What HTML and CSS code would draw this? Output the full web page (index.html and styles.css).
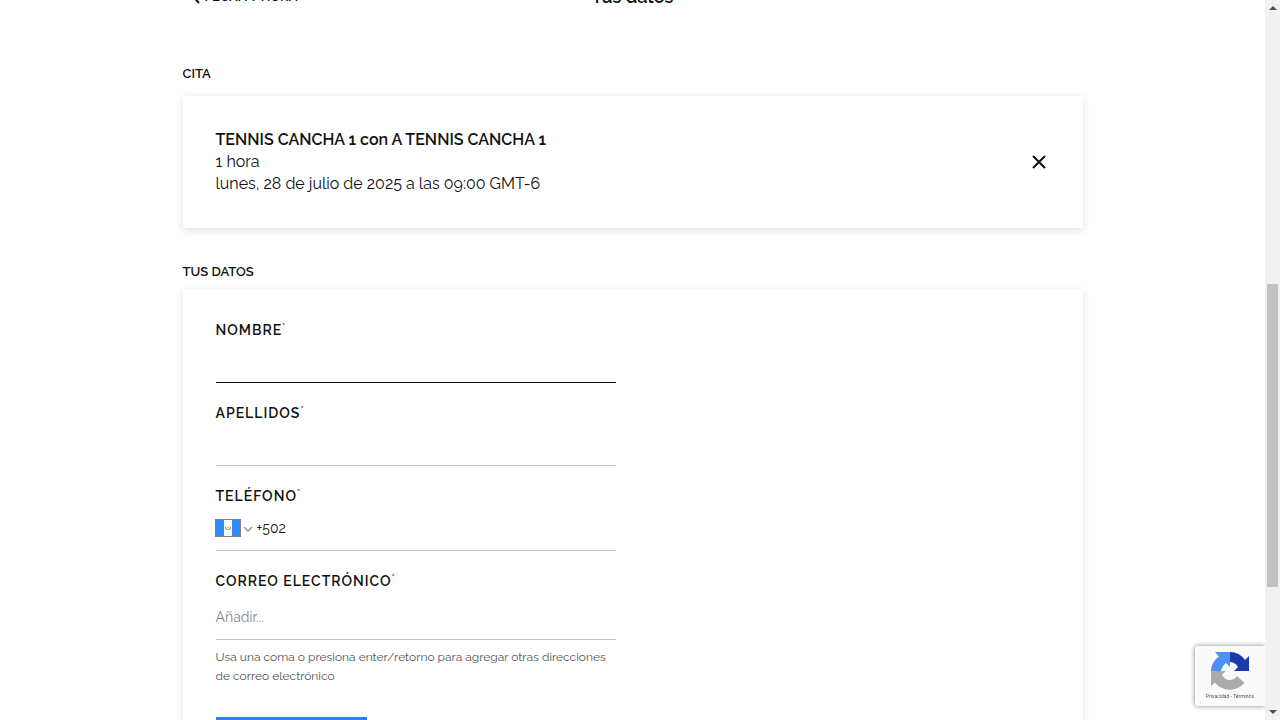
FILE: index.html
```html
<!DOCTYPE html>
<html lang="es">
<head>
<meta charset="utf-8">
<meta name="viewport" content="width=device-width, initial-scale=1">
<title>Tus datos</title>
<link rel="stylesheet" href="styles.css">
</head>
<body>
<div class="page">
  <main class="content">
    <header class="topbar">
      <a class="back" href="#">
        <svg class="back-icon" viewBox="0 0 10 18" aria-hidden="true"><path d="M9 1 1.500 9 9 17"/></svg>
        <span>FECHA Y HORA</span>
      </a>
      <h1 class="title">Tus datos</h1>
    </header>

    <h2 class="section-title">CITA</h2>
    <section class="card appointment">
      <div class="summary">
        <strong class="service">TENNIS CANCHA 1 con A TENNIS CANCHA 1</strong>
        <span>1 hora</span>
        <span>lunes, 28 de julio de 2025 a las 09:00 GMT-6</span>
      </div>
      <button class="remove" type="button">
        <svg class="remove-icon" viewBox="0 0 14 14" aria-hidden="true"><path d="M1 1l12 12M13 1 1 13"/></svg>
      </button>
    </section>

    <h2 class="section-title section-title-form">TUS DATOS</h2>
    <form class="card form">
      <div class="field">
        <label class="label" for="first">NOMBRE<span class="required">*</span></label>
        <input class="input active" id="first" type="text">
      </div>
      <div class="field">
        <label class="label" for="last">APELLIDOS<span class="required">*</span></label>
        <input class="input" id="last" type="text">
      </div>
      <div class="field">
        <label class="label" for="phone">TELÉFONO<span class="required">*</span></label>
        <div class="phone-row">
          <button class="country" type="button">
            <svg class="flag" viewBox="0 0 26 18" aria-hidden="true">
              <rect width="26" height="18" fill="#808080"/>
              <rect x="1" y="1" width="24" height="16" fill="#338af3"/>
              <rect x="9" y="1" width="8" height="16" fill="#fff"/>
              <path d="M10.500 8q0 2.500 2 2.500M15.500 8q0 2.500-2 2.500" fill="none" stroke="#628b52"/>
              <path d="M12 7.500l2 2M14 7.500l-2 2" stroke="#d9b44a"/>
            </svg>
            <svg class="chevron" viewBox="0 0 10 8" aria-hidden="true"><path d="M1 2l4 4 4-4"/></svg>
          </button>
          <input class="phone" id="phone" type="tel" value="+502">
        </div>
      </div>
      <div class="field">
        <label class="label" for="email">CORREO ELECTRÓNICO<span class="required">*</span></label>
        <input class="input email" id="email" type="email" placeholder="Añadir..." aria-describedby="hint">
        <p class="hint" id="hint">Usa una coma o presiona enter/retorno para agregar otras direcciones de correo electrónico</p>
      </div>
      <button class="submit" type="submit"></button>
    </form>
  </main>
</div>

<aside class="captcha">
  <svg class="captcha-icon" viewBox="0 0 38 38" aria-hidden="true">
    <path fill="#1c3aa9" d="M38 19V4l-4 4A19 19 0 0 0 19 0v10q5 0 8 5l-4 4z"/>
    <path fill="#4a90f5" d="M19 0H4l4 4.500A19 19 0 0 0 0 19h10q1-5 5-8l4 4z"/>
    <path fill="#ababab" d="M0 19v15l4-3.500A19 19 0 0 0 33.500 31L26 24q-3 4-7 4-5 0-8-5l4-4z"/>
  </svg>
  <span class="captcha-links"><a href="#">Privacidad</a> - <a href="#">Términos</a></span>
</aside>

<div class="scrollbar" aria-hidden="true">
  <svg class="arrow" viewBox="0 0 15 17"><path d="M4 10l4-4 4 4z"/></svg>
  <div class="track"><div class="thumb"></div></div>
  <svg class="arrow" viewBox="0 0 15 17"><path d="M4 7l4 4 4-4z"/></svg>
</div>
</body>
</html>
```
FILE: styles.css
```css
* { box-sizing: border-box; }

body {
  margin: 0;
  height: 100vh;
  display: flex;
  overflow: hidden;
  background: #fff;
  color: #111;
  font-family: Raleway, Lato, sans-serif;
  font-size: 16px;
  line-height: 22px;
}

button, input { font: inherit; color: inherit; }
button { border: 0; padding: 0; background: none; cursor: pointer; }
a { color: inherit; text-decoration: none; }

.page { flex: 1; min-width: 0; overflow: hidden; padding: 0 24px; }
.content { max-width: 900px; margin: 0 auto; }

.topbar {
  height: 8px;
  display: grid;
  grid-template-columns: 1fr auto 1fr;
  align-items: end;
  align-content: end;
}
.back {
  display: flex;
  align-items: end;
  gap: 5px;
  padding: 0 0 4px 7px;
  font-size: 13px;
  line-height: 14px;
  font-weight: 600;
}
.back-icon { width: 10px; height: 18px; fill: none; stroke: #111; stroke-width: 2; }
.title { margin: 0; font-size: 18px; line-height: 22px; font-weight: 600; }

.section-title { margin: 57px 0 13px; font-size: 13px; line-height: 18px; font-weight: 600; }
.section-title-form { margin: 35px 0 8px; }

.card { background: #fff; box-shadow: 0 2px 8px rgba(0, 0, 0, 0.12); }

.appointment {
  display: flex;
  align-items: center;
  justify-content: space-between;
  padding: 33px 32px 33px 33px;
}
.summary { display: flex; flex-direction: column; }
.service { font-weight: 600; }
.remove { display: grid; place-items: center; width: 24px; height: 24px; }
.remove-icon { width: 14px; height: 14px; stroke: #111; stroke-width: 2; }

.form { padding: 32px 33px; }
.field { max-width: 400px; margin-bottom: 21px; }
.label {
  display: block;
  font-size: 14px;
  line-height: 18px;
  font-weight: 600;
  letter-spacing: 1px;
}
.required {
  color: #d0021b;
  font-size: 10px;
  line-height: 12px;
  font-weight: 600;
  vertical-align: top;
}
.input {
  display: block;
  width: 100%;
  height: 44px;
  padding: 0;
  border: 0;
  border-bottom: 1px solid #c8c8c8;
  border-radius: 0;
  background: none;
  font-size: 14px;
  outline: 0;
}
.active { border-color: #111; }
.phone-row {
  display: flex;
  align-items: center;
  gap: 4px;
  height: 46px;
  border-bottom: 1px solid #c8c8c8;
}
.country { display: flex; align-items: center; gap: 2px; margin-left: -1px; }
.flag { width: 26px; height: 18px; }
.chevron { width: 10px; height: 8px; margin-top: 3px; fill: none; stroke: #999; stroke-width: 1.5; }
.phone { flex: 1; min-width: 0; border: 0; padding: 0; outline: 0; background: none; font-size: 14px; }
.email { height: 50px; padding-top: 4px; }
.email::placeholder { color: #888; opacity: 1; }
.hint { margin: 8px 0 0; color: #555; font-size: 12px; line-height: 19px; }
.submit { display: block; width: 151px; height: 48px; margin-top: 31px; background: #2f80ed; }

.captcha {
  position: fixed;
  right: 15px;
  bottom: 14px;
  width: 70px;
  height: 60px;
  display: flex;
  flex-direction: column;
  align-items: center;
  gap: 2px;
  padding-top: 6px;
  background: #fafafa;
  border-radius: 2px 0 0 2px;
  box-shadow: 0 0 5px #808080;
  clip-path: inset(-8px 0 -8px -8px);
}
.captcha-icon { width: 38px; height: 38px; }
.captcha-links { color: #555; font: 5px/8px Roboto, sans-serif; white-space: nowrap; }

.scrollbar { width: 15px; display: flex; flex-direction: column; background: #f1f1f1; }
.arrow { width: 15px; height: 17px; fill: #505050; }
.track { flex: 1; padding: 0 2px; display: grid; grid-template-rows: 267fr 303fr 116fr; }
.thumb { grid-row: 2; width: 11px; background: #c1c1c1; }
```
